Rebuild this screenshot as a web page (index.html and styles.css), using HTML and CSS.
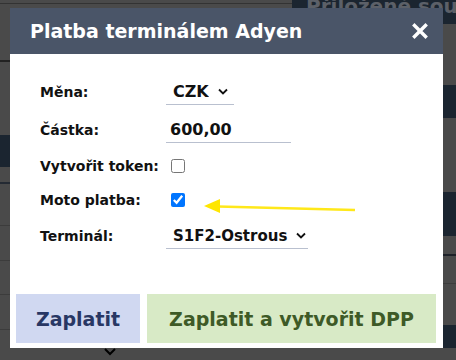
FILE: index.html
```html
<!DOCTYPE html>
<html lang="cs">
<head>
    <meta charset="UTF-8">
    <meta name="viewport" content="width=device-width, initial-scale=1.0">
    <title>Platba terminálem Adyen</title>
    <link rel="stylesheet" href="styles.css">
</head>
<body>
    <!-- page behind the dialog, dimmed -->
    <div class="page">
        <div class="col-left">
            <div class="row r1"></div>
            <div class="row r2"></div>
            <div class="row r3"></div>
            <div class="row r4 dark"></div>
            <div class="row r5"></div>
            <div class="row r6"></div>
            <div class="row r7"></div>
            <div class="row r8"></div>
            <div class="row r9"></div>
            <div class="row r10">
                <svg class="chev-bg" width="12" height="8" viewBox="0 0 12 8"><path d="M1 1l5 5 5-5" fill="none" stroke="#000" stroke-width="2"/></svg>
            </div>
        </div>
        <div class="col-right">
            <div class="blk b1 dark"><span class="bg-title">Přiložené soubo</span></div>
            <div class="blk b2"></div>
            <div class="blk b3 dark"></div>
            <div class="blk b4"></div>
            <div class="blk b5 dark"><span class="bg-title right">y</span></div>
            <div class="blk b6"></div>
            <div class="blk b7"></div>
            <div class="blk b8"></div>
            <div class="blk b9 dark"></div>
        </div>
    </div>

    <div class="modal">
        <div class="modal-head">
            <h2>Platba terminálem Adyen</h2>
            <button class="close" aria-label="Zavřít">
                <svg width="16" height="16" viewBox="0 0 16 16"><path d="M2.5 2.5l11 11M13.5 2.5l-11 11" stroke="#fff" stroke-width="3.4" stroke-linecap="square"/></svg>
            </button>
        </div>
        <div class="modal-body">
            <div class="frow h38">
                <label for="mena">Měna:</label>
                <span class="select">
                    <select id="mena"><option>CZK</option></select>
                    <svg width="10" height="7" viewBox="0 0 10 7"><path d="M1 1.5l4 4 4-4" fill="none" stroke="#111" stroke-width="1.8"/></svg>
                </span>
            </div>
            <div class="frow h38">
                <label for="castka">Částka:</label>
                <input class="amount" id="castka" type="text" value="600,00">
            </div>
            <div class="frow h34">
                <label for="token">Vytvořit token:</label>
                <input class="check" id="token" type="checkbox">
            </div>
            <div class="frow h34">
                <label for="moto">Moto platba:</label>
                <input class="check" id="moto" type="checkbox" checked>
            </div>
            <div class="frow h38">
                <label for="terminal">Terminál:</label>
                <span class="select wide">
                    <select id="terminal"><option>S1F2-Ostrous</option></select>
                    <svg width="10" height="7" viewBox="0 0 10 7"><path d="M1 1.5l4 4 4-4" fill="none" stroke="#111" stroke-width="1.8"/></svg>
                </span>
            </div>
        </div>
        <div class="modal-foot">
            <button class="btn pay">Zaplatit</button>
            <button class="btn pay-dpp">Zaplatit a vytvořit DPP</button>
        </div>
        <svg class="arrow" width="160" height="20" viewBox="0 0 160 20"><path d="M14 7.5L151 11" stroke="#ffe81a" stroke-width="2.5"/><path d="M0 7l16-7v14z" fill="#ffe600"/></svg>
    </div>
</body>
</html>
```

FILE: styles.css
```css
body{
    margin: 0;
    width: 456px;
    height: 360px;
    overflow: hidden;
    background-color: #4a4a4a;
    font-family: "DejaVu Sans", Arial, sans-serif;
    position: relative;
}
.page{
    display: grid;
    grid-template-columns: 292px 1fr;
    height: 360px;
}
.row{
    border-bottom: 1px solid #3c3c3c;
}
.dark{
    background-color: #1b2530;
}
.r1{ height: 3px; border-color: #333; }
.r2{ height: 56px; border-bottom: 2px solid #222; }
.r3{ height: 73px; border: none; }
.r4{ height: 32px; border: none; }
.r5{ height: 15px; border-bottom: 2px solid #242a33; }
.r6{ height: 41px; }
.r7{ height: 34px; }
.r8{ height: 33px; }
.r9{ height: 34px; }
.r10{ position: relative; border: none; }
.chev-bg{
    position: absolute;
    left: 104px;
    top: 18px;
}
.blk{ overflow: hidden; }
.b1{ height: 24px; }
.b2{ height: 61px; }
.b3{ height: 33px; }
.b4{ height: 74px; }
.b5{ height: 44px; }
.b6{ height: 18px; border-bottom: 2px solid #1d2128; }
.b7{ height: 27px; border-bottom: 1px solid #3c3c3c; }
.b8{ height: 41px; }
.b9{ height: 23px; margin-right: 13px; }
.bg-title{
    display: block;
    padding-left: 14px;
    margin-top: -6px;
    font-size: 20px;
    font-weight: bold;
    color: #5c6068;
    white-space: nowrap;
}
.bg-title.right{
    margin-top: 4px;
    text-align: right;
    padding-right: 2px;
}

.modal{
    position: absolute;
    left: 10px;
    top: 8px;
    width: 433px;
    height: 340px;
    background-color: #fff;
    display: flex;
    flex-direction: column;
}
.modal-head{
    height: 46px;
    background-color: #4a5568;
    display: flex;
    align-items: center;
    justify-content: space-between;
    padding: 0 15px 0 20px;
}
.modal-head h2{
    margin: 0;
    color: #fff;
    font-size: 19px;
    font-weight: bold;
}
.close{
    background: none;
    border: none;
    padding: 0;
    width: 16px;
    height: 16px;
    display: flex;
}
.modal-body{
    padding: 19px 0 0 30px;
}
.frow{
    display: flex;
    align-items: center;
}
.h38{ height: 38px; }
.h34{ height: 34px; }
.frow label{
    width: 126px;
    font-size: 14px;
    font-weight: bold;
    color: #111;
}
.select{
    display: inline-flex;
    align-items: center;
    height: 25px;
    border-bottom: 1px solid #b9c0cf;
    width: 68px;
    box-sizing: border-box;
    padding-left: 7px;
}
.select.wide{
    width: 142px;
}
.select svg{
    flex-shrink: 0;
}
.select select{
    appearance: none;
    border: none;
    background: none;
    padding: 0;
    margin: 0;
    font-family: inherit;
    font-size: 16px;
    font-weight: bold;
    color: #111;
    margin-right: 9px;
}
.select.wide select{
    font-size: 15px;
    margin-right: 8px;
}
.amount{
    width: 125px;
    height: 25px;
    box-sizing: border-box;
    border: none;
    border-bottom: 1px solid #b9c0cf;
    padding: 0 0 0 4px;
    font-family: inherit;
    font-size: 16px;
    font-weight: bold;
    color: #111;
    outline: none;
}
.check{
    width: 14px;
    height: 14px;
    margin: 0 0 0 5px;
}
.modal-foot{
    margin-top: auto;
    display: flex;
    gap: 7px;
    padding: 0 7px 5px 6px;
}
.btn{
    height: 49px;
    border: none;
    font-family: inherit;
    font-size: 19px;
    font-weight: bold;
    cursor: pointer;
}
.pay{
    width: 124px;
    background-color: #d0d8f1;
    color: #283764;
}
.pay-dpp{
    flex: 1;
    background-color: #d8eac6;
    color: #3e5a27;
}
.arrow{
    position: absolute;
    left: 194px;
    top: 191px;
}
```
